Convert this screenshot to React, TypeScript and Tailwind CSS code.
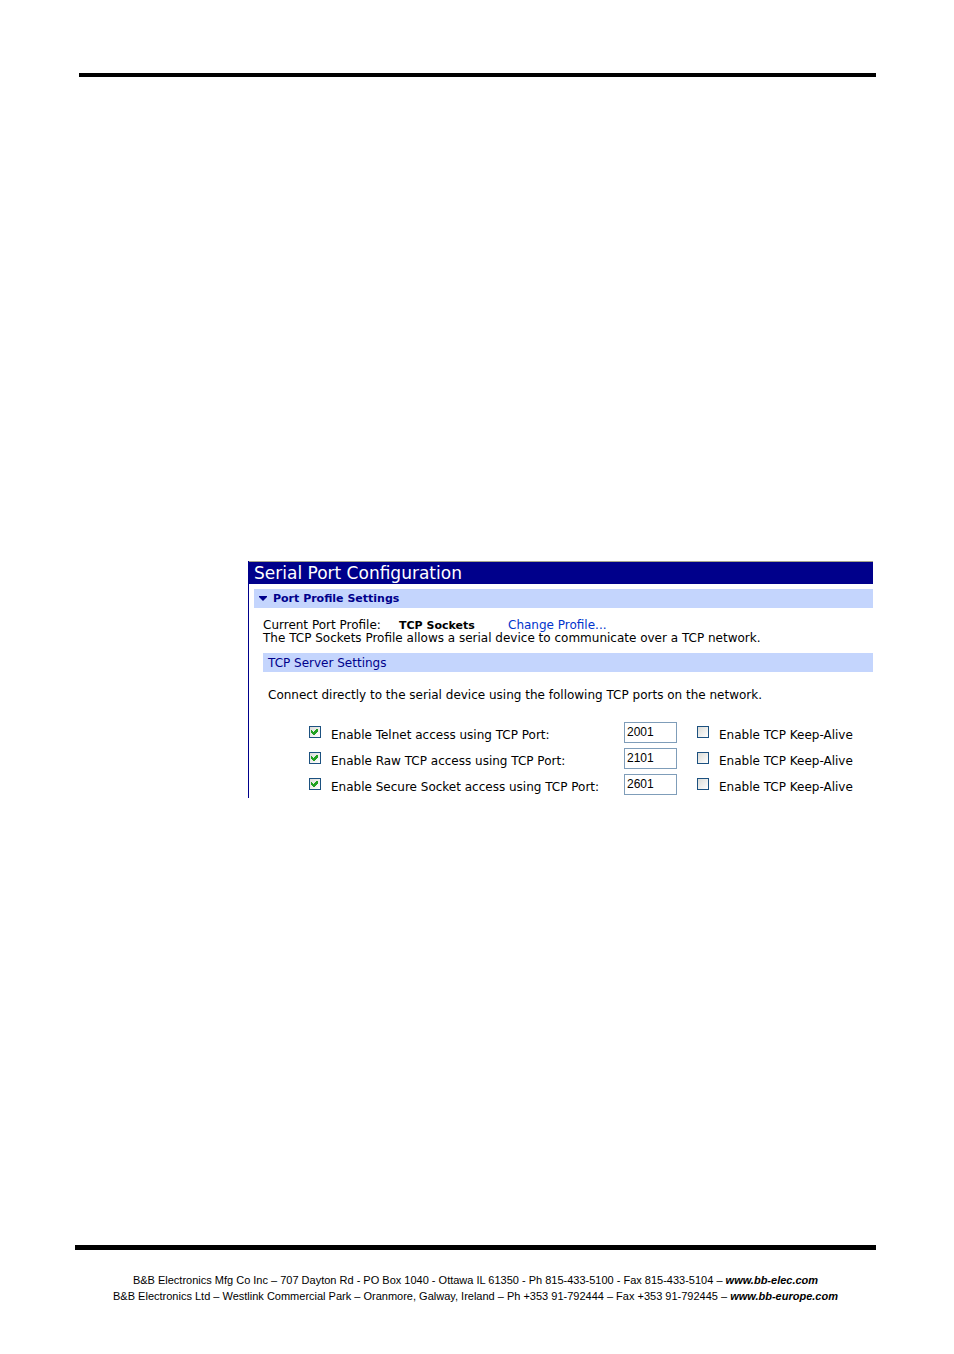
import React, { useState } from 'react';

interface PortRow {
  id: string;
  label: string;
  port: string;
}

const PORT_ROWS: PortRow[] = [
  { id: 'telnet', label: 'Enable Telnet access using TCP Port:', port: '2001' },
  { id: 'raw', label: 'Enable Raw TCP access using TCP Port:', port: '2101' },
  { id: 'secure', label: 'Enable Secure Socket access using TCP Port:', port: '2601' },
];

const CheckBox: React.FC<{ id: string; defaultChecked?: boolean }> = ({ id, defaultChecked = false }) => {
  const [checked, setChecked] = useState(defaultChecked);

  return (
    <span className="relative block h-3 w-3">
      <input
        id={id}
        type="checkbox"
        checked={checked}
        onChange={(e) => setChecked(e.target.checked)}
        className="block h-3 w-3 appearance-none border border-[#1c5180] bg-linear-to-br from-[#dcdcd7] to-white"
      />
      {checked && (
        <svg
          viewBox="0 0 12 12"
          className="pointer-events-none absolute inset-0 h-3 w-3 fill-[#21a121]"
          shapeRendering="crispEdges"
          aria-hidden="true"
        >
          <path d="M2 4h1v1h1v1h1v-1h1v-1h1v-1h2v3h-1v1h-1v1h-1v1h-2v-1h-1v-1h-1z" />
        </svg>
      )}
    </span>
  );
};

const PortAccessRow: React.FC<{ row: PortRow }> = ({ row }) => {
  const [port, setPort] = useState(row.port);

  return (
    <div className="flex h-[21px] items-start">
      <div className="flex w-[315px] gap-[10px] pt-1">
        <CheckBox id={`${row.id}-enable`} defaultChecked />
        <label htmlFor={`${row.id}-enable`} className="whitespace-nowrap pt-[3px]">
          {row.label}
        </label>
      </div>
      <input
        type="text"
        aria-label={row.label}
        value={port}
        onChange={(e) => setPort(e.target.value)}
        className="h-[21px] w-[53px] border border-[#7f9db9] bg-white px-[2px] pb-[2px] font-['Liberation_Sans',sans-serif] text-[12px] leading-4 outline-none"
      />
      <div className="ml-5 flex gap-[10px] pt-1">
        <CheckBox id={`${row.id}-keepalive`} />
        <label htmlFor={`${row.id}-keepalive`} className="whitespace-nowrap pt-[3px]">
          Enable TCP Keep-Alive
        </label>
      </div>
    </div>
  );
};

const SerialPortPanel: React.FC = () => (
  <section className="border-l border-[#00008b] pb-[3px] font-['DejaVu_Sans',sans-serif] text-[12px] leading-[13px] text-black">
    <h1 className="border-t border-[#a5a58c] bg-[#00008b] pl-[5px] text-[17px] leading-[22px] text-white">
      Serial Port Configuration
    </h1>
    <div className="pl-[5px] pt-[5px]">
      <button
        type="button"
        className="flex h-[19px] w-full items-center gap-[6px] bg-[#c4d5fd] pl-[5px] text-[11px] font-bold text-[#00008b]"
      >
        <svg viewBox="0 0 8 5" className="h-[5px] w-2 fill-[#00008b]" aria-hidden="true">
          <path d="M0 0h8v1L4 5L0 1z" />
        </svg>
        Port Profile Settings
      </button>
      <div className="pl-[9px] pt-[11px]">
        <div className="flex">
          <span className="w-[136px]">Current Port Profile:</span>
          <strong className="w-[109px] text-[11px] font-bold">TCP Sockets</strong>
          <a href="#profile" className="text-[#0033cc]">
            Change Profile...
          </a>
        </div>
        <p className="whitespace-nowrap">The TCP Sockets Profile allows a serial device to communicate over a TCP network.</p>
        <h2 className="mt-2 bg-[#c4d5fd] pl-[5px] pt-px leading-[18px] text-[#00008b]">TCP Server Settings</h2>
        <p className="whitespace-nowrap pl-[5px] pt-[17px]">
          Connect directly to the serial device using the following TCP ports on the network.
        </p>
        <div className="flex flex-col gap-[5px] pl-[46px] pt-5">
          {PORT_ROWS.map((row) => (
            <PortAccessRow key={row.id} row={row} />
          ))}
        </div>
      </div>
    </div>
  </section>
);

export default function App() {
  return (
    <div className="flex min-h-screen flex-col bg-white">
      <header className="ml-[79px] mr-[78px] mt-[73px] h-1 bg-black" />
      <main className="flex-1 pl-[248px] pr-[81px] pt-[484px]">
        <SerialPortPanel />
      </main>
      <footer className="ml-[75px] mr-[78px] border-t-[5px] border-black pb-[50px] pt-[22px] text-center font-['Arial_Narrow','Liberation_Sans',sans-serif] text-[11px] leading-4 text-black">
        <p>
          B&amp;B Electronics Mfg Co Inc – 707 Dayton Rd - PO Box 1040 - Ottawa IL 61350 - Ph 815-433-5100 - Fax
          815-433-5104 –{' '}
          <a href="#bb-elec" className="whitespace-nowrap font-bold italic">
            www.bb-elec.com
          </a>
        </p>
        <p>
          B&amp;B Electronics Ltd – Westlink Commercial Park – Oranmore, Galway, Ireland – Ph +353 91-792444 – Fax +353
          91-792445 –{' '}
          <a href="#bb-europe" className="whitespace-nowrap font-bold italic">
            www.bb-europe.com
          </a>
        </p>
      </footer>
    </div>
  );
}
